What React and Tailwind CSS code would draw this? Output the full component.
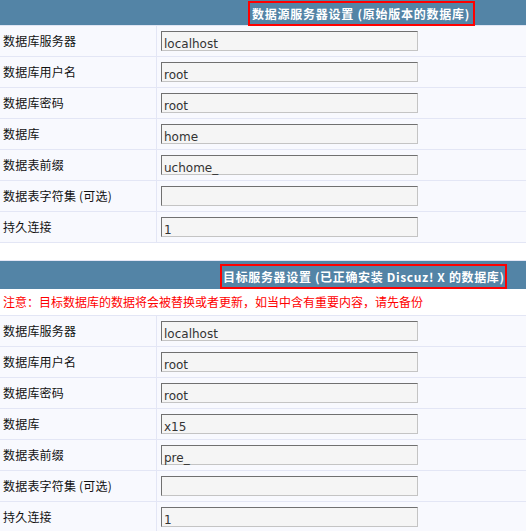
import React from "react";

const font = { fontFamily: '"Noto Sans CJK SC", "Liberation Sans", sans-serif' };

function Row({ label, value }) {
  return (
    <div className="flex h-[31px] border-b border-[#e3e6f5] bg-[#f8f9fe]">
      <div className="w-[157px] shrink-0 border-r border-[#e3e6f5] pl-[3px] flex items-center text-[12px] text-[#111] tracking-[0.2px]">
        {label}
      </div>
      <div className="flex items-center pl-[4px]">
        <div className="w-[257px] h-[20px] bg-[#f5f5f5] border-t border-l border-[#707070] border-r border-b border-r-[#c4c4c4] border-b-[#c4c4c4] pl-[2px] pt-[6px] flex items-center text-[12px] text-[#333] leading-none font-['DejaVu_Sans',sans-serif]">
          {value}
        </div>
      </div>
    </div>
  );
}

export default function App() {
  const first = [
    ["数据库服务器", "localhost"],
    ["数据库用户名", "root"],
    ["数据库密码", "root"],
    ["数据库", "home"],
    ["数据表前缀", "uchome_"],
    ["数据表字符集 (可选)", ""],
    ["持久连接", "1"],
  ];
  const second = [
    ["数据库服务器", "localhost"],
    ["数据库用户名", "root"],
    ["数据库密码", "root"],
    ["数据库", "x15"],
    ["数据表前缀", "pre_"],
    ["数据表字符集 (可选)", ""],
    ["持久连接", "1"],
  ];
  return (
    <div className="w-[526px] h-[531px] overflow-hidden bg-white" style={font}>
      <div className="h-[26px] bg-[#5384a6] border-b border-[#dfe5f3] flex items-start pl-[248px]">
        <div className="mt-[1px] h-[25px] w-[227px] border-2 border-[#ff0000] flex items-center pl-[2px] text-white font-bold text-[12px] whitespace-nowrap tracking-[0.75px]">
          数据源服务器设置 (原始版本的数据库)
        </div>
      </div>
      {first.map(([l, v], i) => (
        <Row key={i} label={l} value={v} />
      ))}
      <div className="h-[18px] bg-white border-b border-[#e3e6f5]" />
      <div className="h-[28px] bg-[#5384a6] flex items-start pl-[220px] pt-[3px]">
        <div className="h-[25px] w-[287px] border-2 border-[#ff0000] flex items-center pl-[1px] text-white font-bold text-[12px] whitespace-nowrap tracking-[0.65px]">
          目标服务器设置 (已正确安装 Discuz! X 的数据库)
        </div>
      </div>
      <div className="h-[27px] bg-white border-b border-[#e3e6f5] flex items-center pl-[3px] text-[12px] text-[#ff0000]">
        注意：目标数据库的数据将会被替换或者更新，如当中含有重要内容，请先备份
      </div>
      {second.map(([l, v], i) => (
        <Row key={i} label={l} value={v} />
      ))}
    </div>
  );
}
